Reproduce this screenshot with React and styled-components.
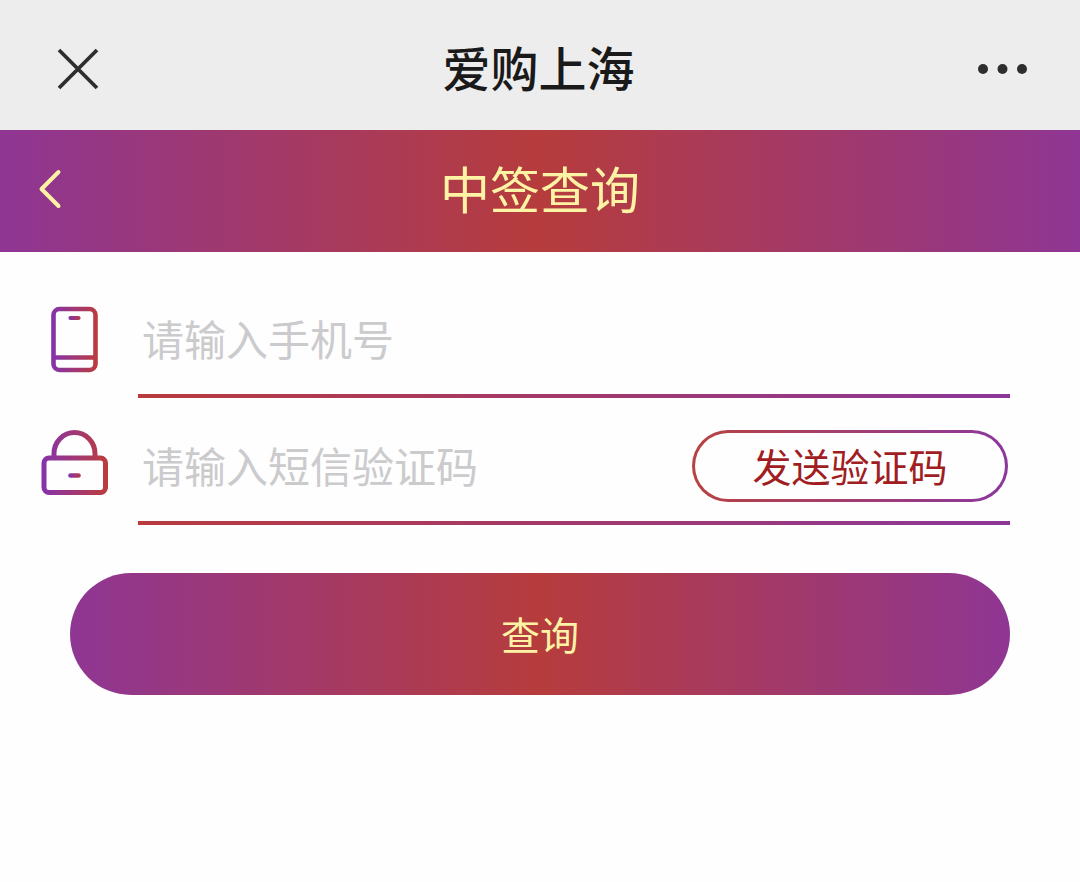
import React, { useState } from 'react';
import styled, { createGlobalStyle } from 'styled-components';

const App = () => {
    const [phone, setPhone] = useState('');
    const [code, setCode] = useState('');

    return (
        <>
            <GlobalStyle />
            <TopBar>
                <IconButton type='button' aria-label='关闭'>
                    <svg width='42' height='42' viewBox='0 0 42 42' fill='none' stroke='#2e2e2e' strokeWidth='3.8'>
                        <path d='M2 2L40 40M40 2L2 40' />
                    </svg>
                </IconButton>
                <AppTitle>爱购上海</AppTitle>
                <IconButton type='button' aria-label='更多'>
                    <svg width='50' height='12' viewBox='0 0 50 12' fill='#2e2e2e'>
                        <circle cx='5' cy='6' r='5' />
                        <circle cx='24.5' cy='6' r='5' />
                        <circle cx='44' cy='6' r='5' />
                    </svg>
                </IconButton>
            </TopBar>

            <NavBar>
                <BackButton type='button' aria-label='返回'>
                    <svg width='24' height='40' viewBox='0 0 24 40' fill='none' stroke='#fdf3a4' strokeWidth='4' strokeLinecap='round' strokeLinejoin='round'>
                        <path d='M20.5 3L3.5 20L20.5 37' />
                    </svg>
                </BackButton>
                <PageTitle>中签查询</PageTitle>
            </NavBar>

            <Form onSubmit={(e) => e.preventDefault()}>
                <Row>
                    <FieldLabel htmlFor='phone' aria-label='手机号'>
                        <PhoneIcon />
                    </FieldLabel>
                    <Field>
                        <Input
                            id='phone'
                            type='tel'
                            placeholder='请输入手机号'
                            value={phone}
                            onChange={(e) => setPhone(e.target.value)}
                        />
                    </Field>
                </Row>
                <Row>
                    <FieldLabel htmlFor='code' aria-label='短信验证码'>
                        <LockIcon />
                    </FieldLabel>
                    <Field>
                        <Input
                            id='code'
                            type='text'
                            placeholder='请输入短信验证码'
                            value={code}
                            onChange={(e) => setCode(e.target.value)}
                        />
                        <SendButton type='button'>发送验证码</SendButton>
                    </Field>
                </Row>
                <SubmitButton type='submit'>查询</SubmitButton>
            </Form>
        </>
    )
}

const PhoneIcon = () => (
    <svg width='68' height='68' viewBox='0 0 68 68' fill='none' stroke='url(#phoneStroke)' strokeWidth='4.6'>
        <defs>
            <linearGradient id='phoneStroke' gradientUnits='userSpaceOnUse' x1='10' y1='0' x2='58' y2='0'>
                <stop offset='0' stopColor='#8433ad' />
                <stop offset='1' stopColor='#bd3d3b' />
            </linearGradient>
            <linearGradient id='phoneSpeaker' gradientUnits='userSpaceOnUse' x1='28' y1='0' x2='41' y2='0'>
                <stop offset='0' stopColor='#8433ad' />
                <stop offset='1' stopColor='#bd3d3b' />
            </linearGradient>
        </defs>
        <rect x='12.5' y='3' width='42' height='61' rx='6' />
        <path d='M12.5 51.5H54.5' />
        <path d='M29.5 12H37.5' stroke='url(#phoneSpeaker)' strokeWidth='4.2' strokeLinecap='round' />
    </svg>
)

const LockIcon = () => (
    <svg width='68' height='76' viewBox='0 0 68 76' fill='none' stroke='url(#lockStroke)' strokeWidth='5'>
        <defs>
            <linearGradient id='lockStroke' gradientUnits='userSpaceOnUse' x1='0' y1='0' x2='68' y2='0'>
                <stop offset='0' stopColor='#8433ad' />
                <stop offset='1' stopColor='#bd3d3b' />
            </linearGradient>
            <linearGradient id='lockHole' gradientUnits='userSpaceOnUse' x1='28' y1='0' x2='41' y2='0'>
                <stop offset='0' stopColor='#8433ad' />
                <stop offset='1' stopColor='#bd3d3b' />
            </linearGradient>
        </defs>
        <rect x='3' y='29' width='61.5' height='34.5' rx='5' />
        <path d='M13 29V24.5A20.5 21 0 0 1 54 24.5V29' />
        <path d='M29.5 46.5H37.5' stroke='url(#lockHole)' strokeWidth='4.6' strokeLinecap='round' />
    </svg>
)

export default App


const GlobalStyle = createGlobalStyle`
* {
    box-sizing: border-box;
}

body {
    margin: 0;
    background: #fefefe;
    font-family: "Noto Sans CJK SC", sans-serif;
}

button, input {
    font-family: inherit;
}
`;

const TopBar = styled.header`
height: 130px;
padding: 8px 52px 0 57px;
display: flex;
align-items: center;
justify-content: space-between;
background: #ededed;
`;

const IconButton = styled.button`
display: flex;
padding: 0;
border: none;
background: none;
cursor: pointer;
`;

const AppTitle = styled.h1`
margin: 0;
padding-bottom: 6px;
font-size: 48px;
font-weight: 500;
line-height: 60px;
color: #1a1a1a;
`;

const NavBar = styled.nav`
height: 122px;
padding: 0 38px 4px;
display: grid;
grid-template-columns: 1fr auto 1fr;
align-items: center;
background: linear-gradient(90deg, #8f3694, #b63c3c 50%, #8f3694);
`;

const BackButton = styled(IconButton)`
justify-self: start;
`;

const PageTitle = styled.h2`
margin: 0;
padding-bottom: 4px;
font-size: 50px;
font-weight: 400;
line-height: 60px;
color: #fdf3a4;
`;

const Form = styled.form`
padding: 19px 70px 0 0;
display: flex;
flex-direction: column;
`;

const Row = styled.div`
display: grid;
grid-template-columns: 138px 1fr;
`;

const FieldLabel = styled.label`
padding: 10px 0 0 12px;
display: flex;
align-items: center;
justify-content: center;
`;

const Field = styled.div`
height: 127px;
padding: 12px 2px 0 4px;
display: flex;
align-items: center;
border-bottom: 4px solid;
border-image: linear-gradient(90deg, #b93b3e, #8b3799) 1;
`;

const Input = styled.input`
flex: 1;
min-width: 0;
height: 72px;
padding: 0 0 2px;
border: none;
outline: none;
background: none;
font-size: 42px;
color: #333;

&::placeholder {
    color: #cbcbcd;
    opacity: 1;
}
`;

const SendButton = styled.button`
width: 316px;
height: 72px;
padding: 0 0 2px;
border: 3px solid transparent;
border-radius: 36px;
background:
    linear-gradient(#fefefe, #fefefe) padding-box,
    linear-gradient(90deg, #b84242, #8b389d) border-box;
font-size: 39px;
line-height: 60px;
color: #a01d22;
cursor: pointer;
`;

const SubmitButton = styled.button`
height: 122px;
margin: 48px 0 0 70px;
padding: 0 0 2px;
border: none;
border-radius: 61px;
background: linear-gradient(90deg, #8f3694, #b63c3c 50%, #8f3694);
font-size: 39px;
line-height: 60px;
color: #fdf3a4;
cursor: pointer;
`;
